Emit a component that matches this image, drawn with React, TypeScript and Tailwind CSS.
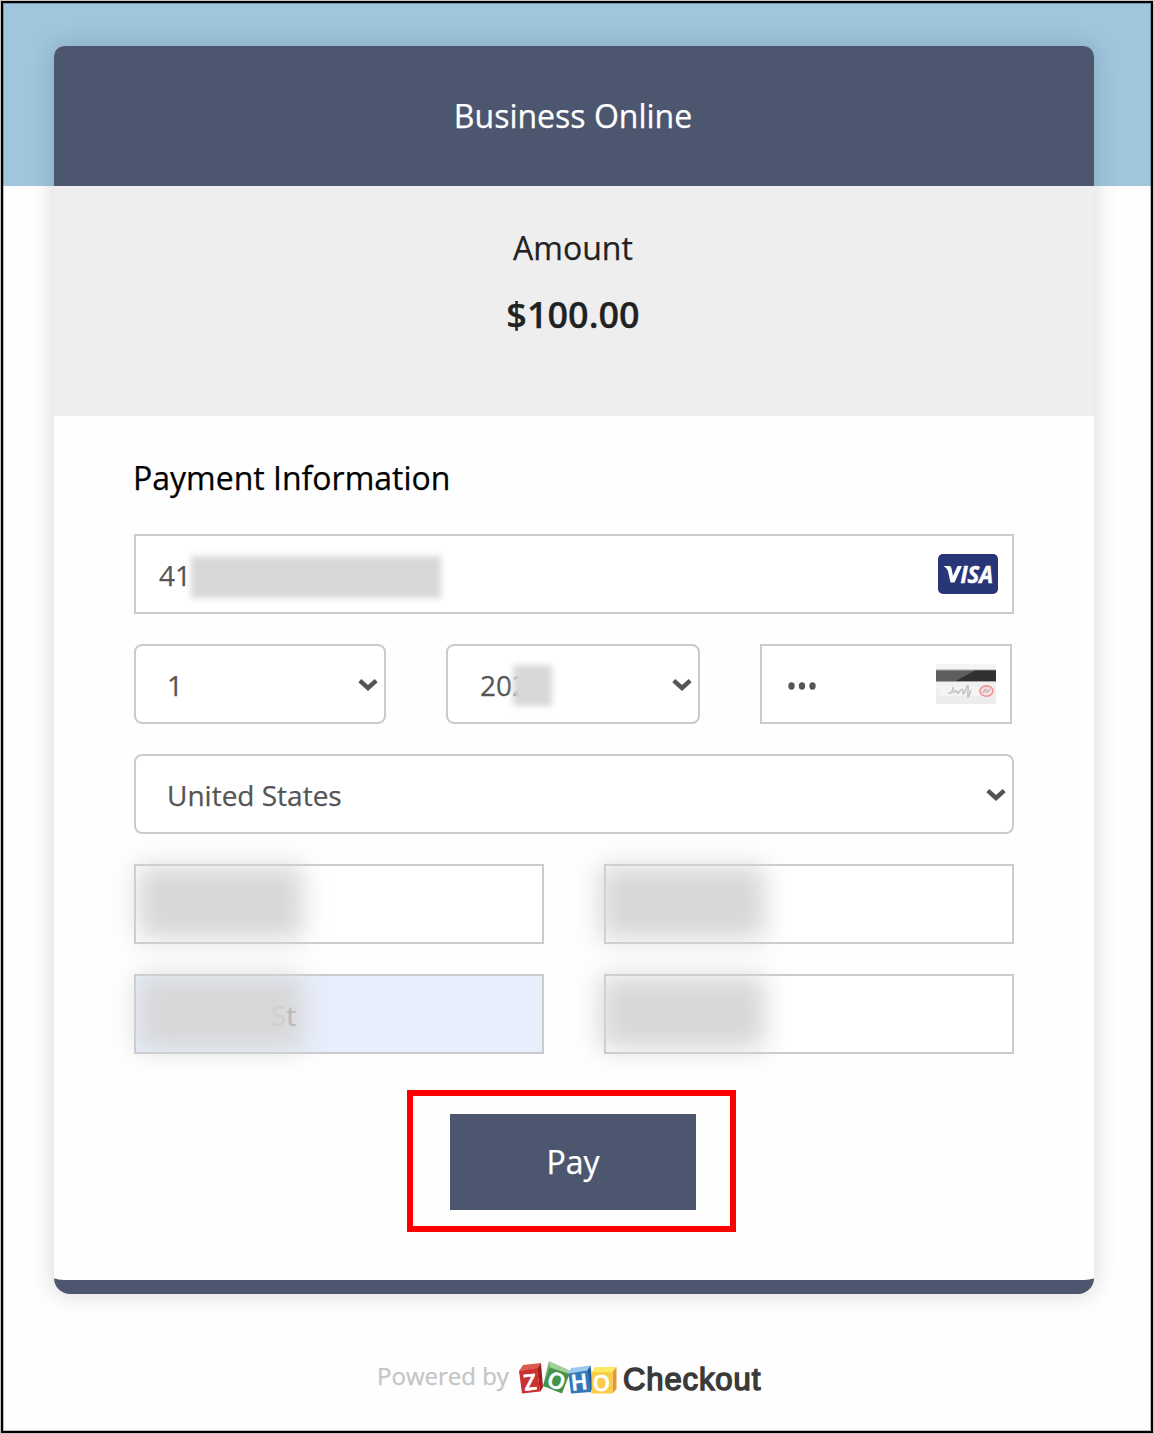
import React from 'react';

const fieldBase = 'relative flex h-20 items-center border-2 border-[#cbcbcb] bg-white text-[28px] text-[#555555]';

const Chevron: React.FC = () => (
  <svg className="mt-px h-3 w-5" viewBox="0 0 20 12" fill="none" stroke="#555555" strokeWidth="4.4">
    <path d="M1.800 1.6 L10 9 L18.200 1.6" />
  </svg>
);

const VisaLogo: React.FC = () => (
  <svg className="h-10 w-[60px]" viewBox="0 0 60 40">
    <rect width="60" height="40" rx="5" fill="#283577" />
    <path d="M5.500 12 H11.500 Q13 12 13.400 14 L15 22 L19.500 12 H24 L16.500 28.500 H12.500 L10 17 Q9.200 14 5.500 12 Z" fill="#fff" />
    <text x="22.500" y="28.500" fill="#fff" stroke="#fff" strokeWidth="0.500" fontFamily="Open Sans, sans-serif" fontSize="23.500" fontWeight="700" fontStyle="italic" textLength="32.500" lengthAdjust="spacingAndGlyphs">ISA</text>
  </svg>
);

const CvvCard: React.FC = () => (
  <svg className="h-10 w-[60px]" viewBox="0 0 60 40">
    <defs>
      <linearGradient id="cardFace" x1="0" y1="0" x2="0" y2="1">
        <stop offset="0" stopColor="#f5f5f5" />
        <stop offset="1" stopColor="#ececec" />
      </linearGradient>
    </defs>
    <rect width="60" height="40" rx="1" fill="url(#cardFace)" />
    <rect y="5.500" width="60" height="12.500" fill="#a5a5a5" />
    <rect y="6.500" width="60" height="10.500" fill="#5e5e5e" />
    <path d="M20 17 L39 6.500 H60 V17 Z" fill="#303030" />
    <rect x="4" y="22" width="38" height="10" fill="#f7f3ef" />
    <path d="M12 29 H15 Q19 23 16 24 M17 29 Q21 25 21 28 T24 27 T27 28 T30 25 T32 28 T35 26" fill="none" stroke="#bcc1cb" strokeWidth="1.500" />
    <ellipse cx="50.500" cy="27" rx="6.500" ry="5.300" fill="#f1dfdf" stroke="#f28b8b" strokeWidth="1.400" />
    <path d="M47 28.500 L50 25 M50 28.500 L54 25.500" stroke="#c4a5aa" strokeWidth="1.300" />
  </svg>
);

const ZohoLogo: React.FC = () => (
  <svg className="h-10 w-[100px] overflow-visible" viewBox="0 0 100 40">
    {/* red */}
    <path d="M1 11 L5 5 L23 3 L19 10 Z" fill="#dc5a50" />
    <path d="M19 9 L23 3 L25 27 L22 32 Z" fill="#a51f22" />
    <path d="M1 11 L19 8.500 L22 31.500 L4 33.500 Z" fill="#c9302f" />
    {/* green */}
    <path d="M25 26 L31 1 L34 9 L28 27 Z" fill="#6bb05c" />
    <path d="M31 1 L51 10 L51 15 L32 8 Z" fill="#a3cf9b" />
    <path d="M32 7.500 L51.500 14 L44 33.500 L25 26 Z" fill="#43934a" />
    {/* blue */}
    <path d="M50 14 L53 8 L72.500 5.500 L70 11 Z" fill="#9cc9ee" />
    <path d="M69 11 L72.500 5.500 L75 28 L72 33 Z" fill="#1f5a9a" />
    <path d="M50.500 13.500 L70 10.500 L73 32 L53 33.500 Z" fill="#3278bb" />
    {/* yellow */}
    <path d="M73.500 12.500 L77 7 H98.500 L94.500 12.500 Z" fill="#ffe95e" />
    <path d="M94.500 12 L98.500 7 V29 L94.500 33.500 Z" fill="#e39a2c" />
    <path d="M73.500 12 H94.500 V33.500 H73.500 Z" fill="#f9cd45" />
    <g fill="#fff" stroke="#fff" strokeWidth="0.600" fontFamily="Open Sans, sans-serif" fontSize="22" fontWeight="600" textAnchor="middle">
      <text transform="translate(13 30) rotate(-7)">Z</text>
      <text transform="translate(35.500 28) rotate(21)">O</text>
      <text transform="translate(62 30) rotate(-6)">H</text>
      <text transform="translate(83.500 30.500)">O</text>
    </g>
  </svg>
);

const Smudge: React.FC<{ className: string }> = ({ className }) => (
  <span className={`absolute top-0 h-[73px] bg-[#d7d7d7] blur-[13px] ${className}`}></span>
);

const App: React.FC = () => {
  return (
    <div className="h-[1434px] w-[1154px] overflow-hidden bg-[#c4c4c4] p-px font-['Open_Sans',sans-serif] [-webkit-text-stroke:0.25px_currentColor]">
      <div className="h-full border-2 border-black">
        <div className="h-full border border-black/25 bg-[linear-gradient(#9fc6dd_183px,#fefefe_183px)] bg-origin-border px-[50px] pt-[42px]">
          {/* Checkout card */}
          <main className="h-[1248px] w-[1040px] rounded-t-[10px] rounded-b-[16px] border-b-[14px] border-[#4c566e] bg-[#fefefe] shadow-[0_0_24px_rgba(0,0,0,0.16)]">
            <header className="flex h-[140px] items-center justify-center rounded-t-[10px] bg-[#4c566e] pr-0.5">
              <h1 className="text-[32px] text-white">Business Online</h1>
            </header>

            <section className="h-[230px] bg-[#eeeeee] pt-[38px] pr-0.5 text-center text-[#222222]">
              <p className="text-[32px] leading-[48px]">Amount</p>
              <p className="mt-[17px] text-[36px] leading-[52px] font-semibold">$100.00</p>
            </section>

            <form className="px-20 pt-[38px]">
              <h2 className="-ml-px text-[32px] leading-[48px] text-black">Payment Information</h2>

              <div className="mt-8 flex flex-col gap-[30px]">
                <div className={`${fieldBase} w-[880px] justify-between pr-3.5 pl-[23px]`}>
                  <span className="pt-0.5">41</span>
                  <span className="absolute top-5 left-[55px] h-[42px] w-[250px] bg-[#d8d8d8] blur-[3px]"></span>
                  <VisaLogo />
                </div>

                <div className="flex">
                  <div className={`${fieldBase} w-[252px] justify-between rounded-lg pr-1.5 pl-[31px]`}>
                    <span className="pt-0.5">1</span>
                    <Chevron />
                  </div>
                  <div className={`${fieldBase} ml-[60px] w-[254px] justify-between rounded-lg pr-1.5 pl-8`}>
                    <span className="pt-0.5">202</span>
                    <span className="absolute top-[19px] left-[65px] h-[41px] w-[39px] bg-[#d8d8d8] blur-[3px]"></span>
                    <Chevron />
                  </div>
                  <div className={`${fieldBase} ml-[60px] w-[252px] justify-between pr-3.5 pl-[25px]`}>
                    <svg className="mt-[3px] h-2 w-[30px]" viewBox="0 0 30 8" fill="#555555">
                      <ellipse cx="4.500" cy="4" rx="3.200" ry="3.700" />
                      <ellipse cx="15" cy="4" rx="3.200" ry="3.700" />
                      <ellipse cx="25.500" cy="4" rx="3.200" ry="3.700" />
                    </svg>
                    <CvvCard />
                  </div>
                </div>

                <div className={`${fieldBase} w-[880px] justify-between rounded-lg pr-1.5 pl-[31px]`}>
                  <span className="pt-0.5">United States</span>
                  <Chevron />
                </div>

                <div className="grid grid-cols-[410px_410px] gap-x-[60px] gap-y-[30px]">
                  <div className={fieldBase}>
                    <Smudge className="left-0.5 w-[165px]" />
                  </div>
                  <div className={fieldBase}>
                    <Smudge className="-left-1.5 w-[165px]" />
                  </div>
                  <div className="relative flex h-20 items-center border-2 border-[#cbcbcb] bg-[#e8eefc] pl-[135px] text-[28px]">
                    <Smudge className="left-0.5 w-[165px]" />
                    <span className="relative pt-0.5 text-[#b8b9bb]">
                      <span className="text-[#d0d0d1]">S</span>t
                    </span>
                  </div>
                  <div className={fieldBase}>
                    <Smudge className="-left-1.5 w-[165px]" />
                  </div>
                </div>
              </div>

              <div className="mt-9 ml-[273px] flex h-[142px] w-[329px] border-[6px] border-[#ff0000] pt-[18px] pl-[37px]">
                <button type="button" className="h-24 w-[246px] bg-[#4c566e] text-[32px] text-white">
                  Pay
                </button>
              </div>
            </form>
          </main>

          <footer className="mt-[62px] flex h-11 pl-[323px]">
            <span className="w-[141px] text-[24px] leading-[40px] whitespace-nowrap text-[#c4c4c4]">Powered by</span>
            <div className="pt-1">
              <ZohoLogo />
            </div>
            <span className="pl-[5px] font-['Liberation_Sans',sans-serif] text-[31px] leading-[48px] tracking-[0.9px] whitespace-nowrap text-[#3b3a38] [-webkit-text-stroke:1.5px_currentColor]">Checkout</span>
          </footer>
        </div>
      </div>
    </div>
  );
};

export default App;
